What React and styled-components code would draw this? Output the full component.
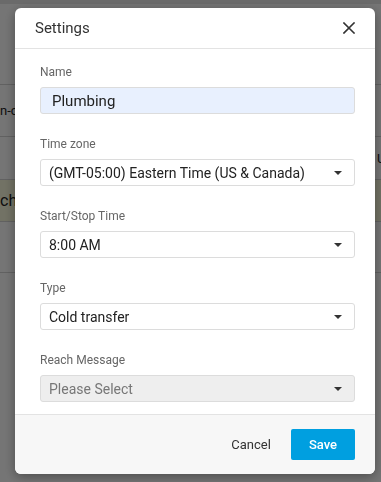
import React from 'react'
import styled, { createGlobalStyle } from 'styled-components'

const GlobalStyle = createGlobalStyle`
  html, body {
    margin: 0;
    padding: 0;
    background: #fff;
    font-family: Roboto, "Liberation Sans", Arial, sans-serif;
  }
`;

const Page = styled.div`
  width: 381px;
  height: 482px;
  overflow: hidden;
  background: #fff;
`;

const TopBar = styled.div`
  height: 4px;
  background: #e8e8e8;
`;

const Row = styled.div`
  height: ${p => p.h}px;
  border-bottom: 1px solid #d4d4d4;
  background: ${p => (p.tint ? '#f9f9dc' : '#fff')};
  display: flex;
  align-items: center;
  padding-left: ${p => p.indent || 0}px;
  font-size: ${p => p.fs || 13}px;
  color: #222;
  white-space: nowrap;
`;

const Overlay = styled.div`
  position: fixed;
  inset: 0;
  background: rgba(0, 0, 0, 0.54);
  display: flex;
  align-items: flex-start;
  padding: 8px 0 0 15px;
`;

const Modal = styled.div`
  width: 360px;
  height: 466px;
  background: #fff;
  border-radius: 6px;
  box-shadow: 0 3px 12px rgba(0, 0, 0, 0.35);
  display: flex;
  flex-direction: column;
  overflow: hidden;
`;

const Header = styled.div`
  height: 41px;
  box-sizing: border-box;
  padding: 0 19px 0 20px;
  border-bottom: 1px solid #e3e3e3;
  display: flex;
  align-items: center;
  justify-content: space-between;
  flex-shrink: 0;
`;

const Title = styled.h2`
  margin: 0;
  font-size: 15px;
  font-weight: 400;
  color: #333;
`;

const Close = styled.button`
  border: 0;
  background: none;
  padding: 0;
  width: 14px;
  height: 14px;
  display: flex;
  align-items: center;
  justify-content: center;
  cursor: pointer;
`;

const Body = styled.div`
  flex: 1;
  padding: 15px 20px 0 25px;
  display: flex;
  flex-direction: column;
  gap: 22px;
`;

const Field = styled.div`
  display: flex;
  flex-direction: column;
`;

const Label = styled.label`
  font-size: 12px;
  line-height: 16px;
  color: #666;
  margin-bottom: 7px;
`;

const Input = styled.div`
  height: 27px;
  box-sizing: border-box;
  border: 1px solid #dcdcdc;
  border-radius: 3px;
  background: #e8f0fe;
  padding: 0 11px;
  display: flex;
  align-items: center;
  font-size: 15px;
  color: #222;
`;

const Select = styled.div`
  height: 27px;
  box-sizing: border-box;
  border: 1px solid #dcdcdc;
  border-radius: 3px;
  background: ${p => (p.disabled ? '#eeeeee' : '#fff')};
  padding: 0 12px 0 8px;
  display: flex;
  align-items: center;
  justify-content: space-between;
  font-size: 14px;
  color: ${p => (p.disabled ? '#777' : '#222')};
`;

const Caret = styled.span`
  width: 0;
  height: 0;
  border-left: 4px solid transparent;
  border-right: 4px solid transparent;
  border-top: 4px solid #333;
`;

const Footer = styled.div`
  height: 60px;
  box-sizing: border-box;
  border-top: 1px solid #e3e3e3;
  background: #f7f7f7;
  padding: 14px 20px 0 0;
  display: flex;
  align-items: flex-start;
  justify-content: flex-end;
  gap: 20px;
  flex-shrink: 0;
`;

const Button = styled.button`
  height: 31px;
  border: 0;
  border-radius: 2px;
  padding: ${p => (p.primary ? '0 18px' : '0')};
  background: ${p => (p.primary ? '#009fe0' : 'transparent')};
  color: ${p => (p.primary ? '#fff' : '#333')};
  font-family: inherit;
  font-size: 13px;
  font-weight: ${p => (p.primary ? 500 : 400)};
  cursor: pointer;
`;

const fields = [
  { label: 'Time zone', value: '(GMT-05:00) Eastern Time (US & Canada)' },
  { label: 'Start/Stop Time', value: '8:00 AM' },
  { label: 'Type', value: 'Cold transfer' },
  { label: 'Reach Message', value: 'Please Select', disabled: true },
];

const App = () => {
  return (
    <Page>
      <GlobalStyle />
      <TopBar />
      <Row h={80} />
      <Row h={51}>n-c</Row>
      <Row h={42} indent={377}>U</Row>
      <Row h={41} tint fs={16}>ch</Row>
      <Row h={50} />

      <Overlay>
        <Modal>
          <Header>
            <Title>Settings</Title>
            <Close aria-label="Close">
              <svg width="12" height="12" viewBox="0 0 12 12">
                <path d="M1 1 L11 11 M11 1 L1 11" stroke="#333" strokeWidth="1.6" strokeLinecap="square" />
              </svg>
            </Close>
          </Header>
          <Body>
            <Field>
              <Label>Name</Label>
              <Input>Plumbing</Input>
            </Field>
            {fields.map(f => (
              <Field key={f.label}>
                <Label>{f.label}</Label>
                <Select disabled={f.disabled}>
                  <span>{f.value}</span>
                  <Caret />
                </Select>
              </Field>
            ))}
          </Body>
          <Footer>
            <Button>Cancel</Button>
            <Button primary>Save</Button>
          </Footer>
        </Modal>
      </Overlay>
    </Page>
  )
}

export default App;
